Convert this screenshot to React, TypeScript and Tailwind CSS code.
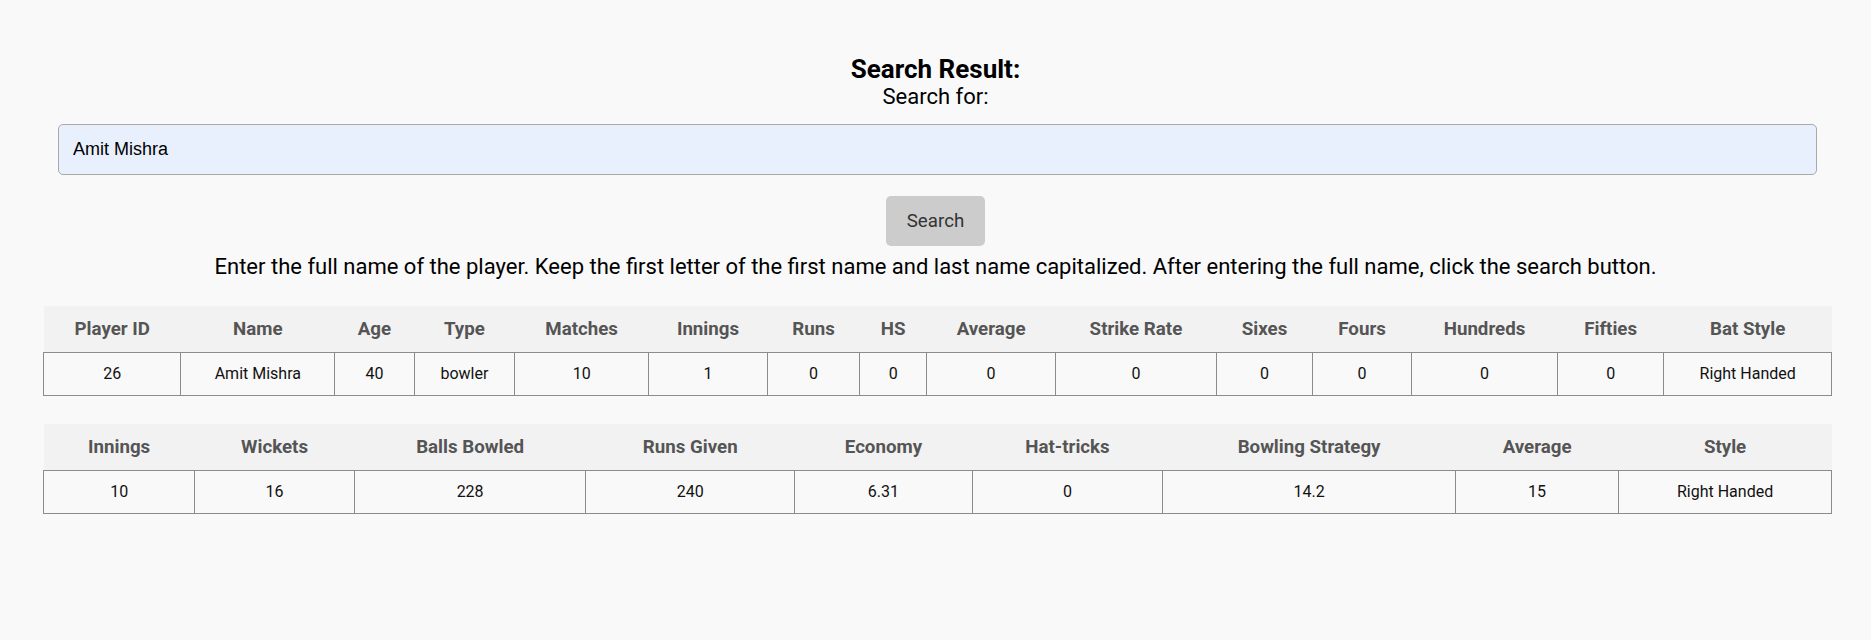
import { useState } from "react";

const battingCols = [
    "Player ID",
    "Name",
    "Age",
    "Type",
    "Matches",
    "Innings",
    "Runs",
    "HS",
    "Average",
    "Strike Rate",
    "Sixes",
    "Fours",
    "Hundreds",
    "Fifties",
    "Bat Style",
];

const battingRow = ["26", "Amit Mishra", "40", "bowler", "10", "1", "0", "0", "0", "0", "0", "0", "0", "0", "Right Handed"];

const bowlingCols = [
    "Innings",
    "Wickets",
    "Balls Bowled",
    "Runs Given",
    "Economy",
    "Hat-tricks",
    "Bowling Strategy",
    "Average",
    "Style",
];

const bowlingRow = ["10", "16", "228", "240", "6.31", "0", "14.2", "15", "Right Handed"];

const StatsTable = ({ cols, row }: { cols: string[]; row: string[] }) => {
    return (
        <table className="ml-[43px] mr-[39px] w-[calc(100%-82px)] border-collapse text-center">
            <thead>
                <tr className="bg-[#f2f2f2]">
                    {cols.map((c) => (
                        <th key={c} className="p-3 text-[18.72px] font-bold text-[#555]">
                            {c}
                        </th>
                    ))}
                </tr>
            </thead>
            <tbody>
                <tr>
                    {row.map((v, i) => (
                        <td key={i} className="border border-[#8c8c8c] p-3 text-[16px] leading-[18px] text-[#111]">
                            {v}
                        </td>
                    ))}
                </tr>
            </tbody>
        </table>
    );
};

const App = () => {
    const [query, setQuery] = useState("Amit Mishra");

    return (
        <div className="min-h-[640px] bg-[#f9f9f9] pt-[54px] font-['Roboto',sans-serif] leading-[normal] text-black">
            <div className="text-center">
                <h2 className="text-[26px] font-bold">Search Result:</h2>
                <p className="text-[22px]">Search for:</p>
            </div>
            <div className="mt-[15px] pl-[58px] pr-[54px]">
                <input
                    value={query}
                    onChange={(e) => setQuery(e.target.value)}
                    className="w-full rounded-[5px] border border-[#a9a9a9] bg-[#e8f0fe] p-[14px] font-['Liberation_Sans',Arial,sans-serif] text-[18px] leading-[normal] text-black outline-none"
                />
            </div>
            <div className="mt-[21px] flex justify-center">
                <button className="h-[50px] rounded-[5px] bg-[#cccccc] px-[21px] text-[18.72px] text-[#333]">
                    Search
                </button>
            </div>
            <p className="mt-[8px] text-center text-[22px]">
                Enter the full name of the player. Keep the first letter of the first name and last name
                capitalized. After entering the full name, click the search button.
            </p>
            <div className="mt-[27px]">
                <StatsTable cols={battingCols} row={battingRow} />
            </div>
            <div className="mt-[28px]">
                <StatsTable cols={bowlingCols} row={bowlingRow} />
            </div>
        </div>
    );
};

export default App;
